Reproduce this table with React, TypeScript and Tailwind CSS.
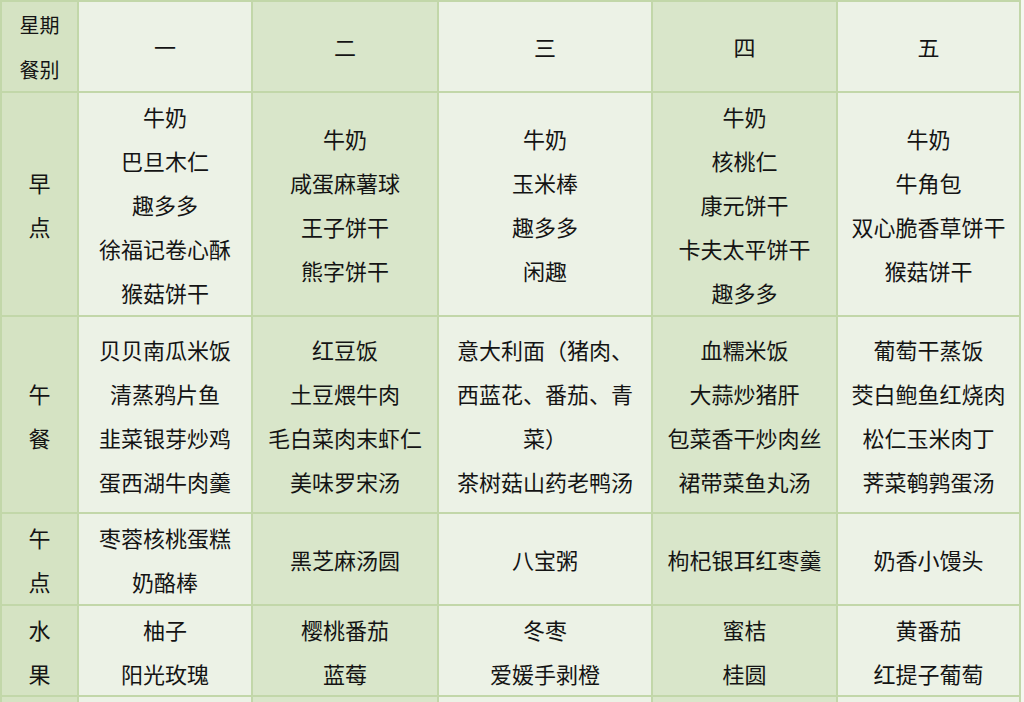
import { Fragment } from "react";

const days = ["一", "二", "三", "四", "五"];

const rows: { label: string[]; cells: string[][]; h: string }[] = [
  {
    label: ["早", "点"],
    h: "h-[222px]",
    cells: [
      ["牛奶", "巴旦木仁", "趣多多", "徐福记卷心酥", "猴菇饼干"],
      ["牛奶", "咸蛋麻薯球", "王子饼干", "熊字饼干"],
      ["牛奶", "玉米棒", "趣多多", "闲趣"],
      ["牛奶", "核桃仁", "康元饼干", "卡夫太平饼干", "趣多多"],
      ["牛奶", "牛角包", "双心脆香草饼干", "猴菇饼干"],
    ],
  },
  {
    label: ["午", "餐"],
    h: "h-[195px]",
    cells: [
      ["贝贝南瓜米饭", "清蒸鸦片鱼", "韭菜银芽炒鸡", "蛋西湖牛肉羹"],
      ["红豆饭", "土豆煨牛肉", "毛白菜肉末虾仁", "美味罗宋汤"],
      ["意大利面（猪肉、", "西蓝花、番茄、青", "菜）", "茶树菇山药老鸭汤"],
      ["血糯米饭", "大蒜炒猪肝", "包菜香干炒肉丝", "裙带菜鱼丸汤"],
      ["葡萄干蒸饭", "茭白鲍鱼红烧肉", "松仁玉米肉丁", "荠菜鹌鹑蛋汤"],
    ],
  },
  {
    label: ["午", "点"],
    h: "h-[90px]",
    cells: [
      ["枣蓉核桃蛋糕", "奶酪棒"],
      ["黑芝麻汤圆"],
      ["八宝粥"],
      ["枸杞银耳红枣羹"],
      ["奶香小馒头"],
    ],
  },
  {
    label: ["水", "果"],
    h: "h-[89px]",
    cells: [
      ["柚子", "阳光玫瑰"],
      ["樱桃番茄", "蓝莓"],
      ["冬枣", "爱媛手剥橙"],
      ["蜜桔", "桂圆"],
      ["黄番茄", "红提子葡萄"],
    ],
  },
];

const colBg = ["bg-[#ecf2e6]", "bg-[#d9e6ca]", "bg-[#ecf2e6]", "bg-[#d9e6ca]", "bg-[#ecf2e6]"];

function Lines({ items }: { items: string[] }) {
  return (
    <div className="flex flex-col items-center">
      {items.map((t, i) => (
        <span key={i} className="leading-[44px] whitespace-nowrap">
          {t}
        </span>
      ))}
    </div>
  );
}

export default function App() {
  return (
    <main
      className="h-[702px] w-[1024px] overflow-hidden bg-[#f4f7f0] text-[22px] text-[#141414]"
      style={{ fontFamily: '"Noto Sans CJK SC", "Noto Sans", sans-serif' }}
    >
      <div className="grid w-[1021px] grid-cols-[75px_172px_184px_212px_183px_181px] gap-[2px] bg-[#c2d7a9] p-[2px]">
        {/* header */}
        <div className="flex h-[89px] flex-col items-center justify-center bg-[#d5e3c3] text-[20px]">
          <span className="leading-[45px]">星期</span>
          <span className="leading-[45px]">餐别</span>
        </div>
        {days.map((d, i) => (
          <div key={d} className={`flex h-[89px] items-center justify-center ${colBg[i]}`}>
            {d}
          </div>
        ))}

        {rows.map((r, ri) => (
          <Fragment key={ri}>
            <div className={`flex ${r.h} items-center justify-center bg-[#d5e3c3]`}>
              <Lines items={r.label} />
            </div>
            {r.cells.map((c, ci) => (
              <div key={ci} className={`flex ${r.h} items-center justify-center ${colBg[ci]}`}>
                <Lines items={c} />
              </div>
            ))}
          </Fragment>
        ))}

        {/* next row, cut off */}
        <div className="h-[40px] bg-[#d5e3c3]" />
        {colBg.map((b, i) => (
          <div key={`n${i}`} className={`h-[40px] ${b}`} />
        ))}
      </div>
    </main>
  );
}
